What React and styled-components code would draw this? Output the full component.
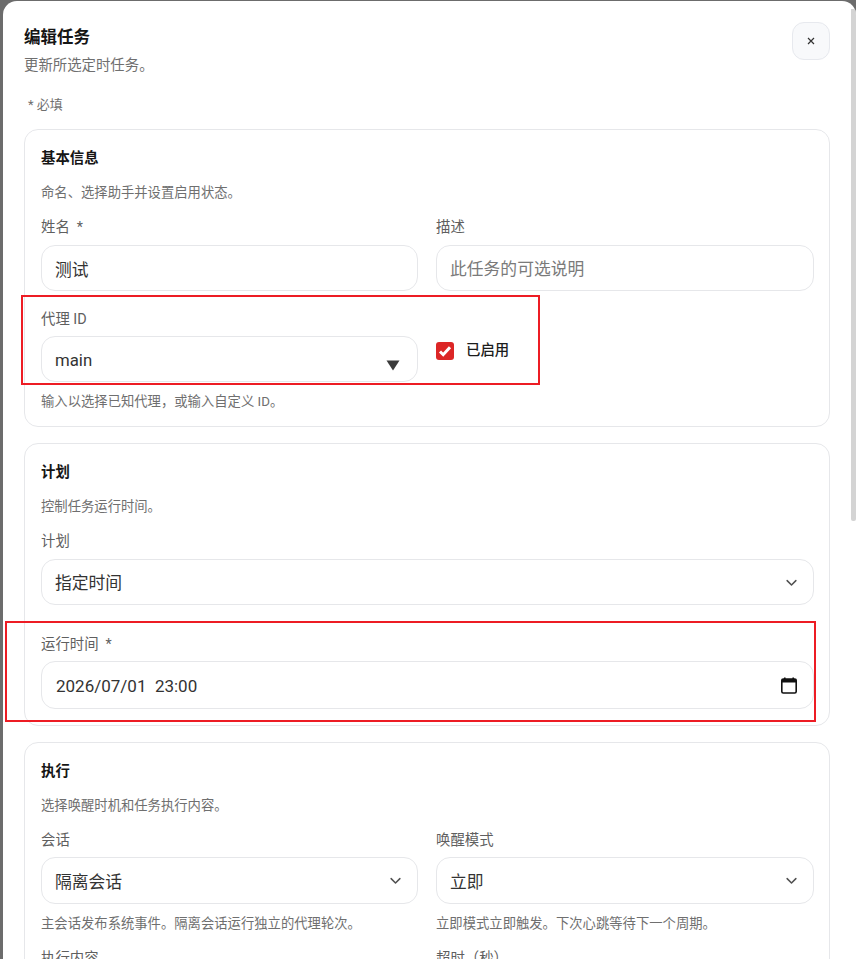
import React from "react";
import styled, { createGlobalStyle } from "styled-components";

const Global = createGlobalStyle`
  html, body { margin: 0; padding: 0; height: 100%; overflow: hidden; }
  body { font-family: Roboto, "Noto Sans CJK SC", "Noto Sans", sans-serif; }
  * { box-sizing: border-box; }
`;

const Backdrop = styled.div`
  position: relative;
  height: 959px;
  overflow: hidden;
  background: #6c6c6c;
  padding: 1px 0 0 3px;
`;

const Dialog = styled.div`
  position: relative;
  height: 100%;
  overflow: hidden;
  background: #fff;
  border-radius: 14px 14px 0 0;
  padding: 21px 26px 0 21px;
`;

const ScrollThumb = styled.div`
  position: absolute;
  top: 8px;
  right: 0;
  width: 5px;
  height: 512px;
  background: #d4d4d4;
  border-radius: 0 0 2px 2px;
`;

const Header = styled.header`
  display: flex;
  justify-content: space-between;
  align-items: flex-start;
`;

const TitleBlock = styled.div`
  padding-top: 3px;
`;

const Title = styled.h2`
  margin: 0;
  font-size: 16.5px;
  line-height: 26px;
  font-weight: 700;
  color: #151515;
`;

const Subtitle = styled.p`
  margin: 5px 0 0;
  font-size: 14.4px;
  line-height: 20px;
  color: #6f6f6f;
`;

const CloseButton = styled.button`
  width: 38px;
  height: 38px;
  padding: 0;
  display: flex;
  align-items: center;
  justify-content: center;
  background: #f8f9fb;
  border: 1px solid #e7e9ee;
  border-radius: 12px;
  color: #333;
`;

const Required = styled.p`
  margin: 20px 0 15px 4px;
  font-size: 13px;
  line-height: 18px;
  color: #6f6f6f;
`;

const Stack = styled.div`
  display: flex;
  flex-direction: column;
`;

const Card = styled.section`
  border: 1px solid #e6e7ea;
  border-radius: 14px;
  padding: 19px 15px ${(p) => p.$bottom ?? 16}px 16px;
  margin-bottom: ${(p) => p.$gap ?? 16}px;
`;

const CardTitle = styled.h3`
  margin: 0;
  font-size: 14.4px;
  line-height: 20px;
  font-weight: 700;
  color: #151515;
`;

const CardDesc = styled.p`
  margin: 15px 0 0;
  font-size: 13.33px;
  line-height: 18px;
  color: #6f6f6f;
`;

const Grid = styled.div`
  display: grid;
  grid-template-columns: 377fr 378fr;
  column-gap: 18px;
  row-gap: ${(p) => p.$rowGap ?? 17}px;
  margin-top: ${(p) => p.$top ?? 15}px;
`;

const Field = styled.div`
  display: flex;
  flex-direction: column;
  min-width: 0;
  grid-column: ${(p) => (p.$wide ? "1 / -1" : "auto")};
`;

const Label = styled.label`
  font-size: 14.4px;
  line-height: ${(p) => p.$line ?? 22}px;
  color: #5f5f5f;
  margin-bottom: ${(p) => p.$gap ?? 6}px;
`;

const Star = styled.span`
  margin-left: 7px;
`;

const Control = styled.div`
  position: relative;
  display: flex;
  align-items: center;
  height: ${(p) => p.$height ?? 46}px;
`;

const TextInput = styled.input`
  width: 100%;
  height: 100%;
  padding: 1px 14px 0 13px;
  font: inherit;
  font-size: 16.8px;
  color: #333;
  background: #fff;
  border: 1px solid #e6e7ea;
  border-radius: 14px;
  outline: none;
  white-space: pre;
  &::placeholder { color: #7a7a7a; opacity: 1; }
`;

const DateInput = styled(TextInput)`
  padding-left: 14px;
  font-size: 17px;
`;

const SelectBox = styled.div`
  width: 100%;
  height: 100%;
  display: flex;
  align-items: center;
  justify-content: space-between;
  padding: 0 14px 0 13px;
  font-size: 16.8px;
  color: #333;
  border: 1px solid #e6e7ea;
  border-radius: 14px;
`;

const ControlIcon = styled.svg`
  position: absolute;
  right: ${(p) => p.$right}px;
  top: ${(p) => p.$top}px;
  pointer-events: none;
`;

const Toggle = styled.label`
  display: flex;
  align-items: center;
  align-self: start;
  gap: 12px;
  padding-top: 33px;
  font-size: 14.4px;
  line-height: 18px;
  font-weight: 500;
  color: #1c1c1c;
`;

const ToggleText = styled.span`
  padding-top: 1px;
`;

const CheckBox = styled.span`
  width: 18px;
  height: 18px;
  display: flex;
  align-items: center;
  justify-content: center;
  background: #dc2626;
  border-radius: 3px;
`;

const Hint = styled.p`
  margin: 10px 0 0;
  font-size: 13.33px;
  line-height: 20px;
  color: #6f6f6f;
`;

const Annotation = styled.div`
  position: absolute;
  left: ${(p) => p.$left}px;
  top: ${(p) => p.$top}px;
  width: ${(p) => p.$width}px;
  height: ${(p) => p.$height}px;
  border: 2px solid #ed1c24;
  pointer-events: none;
`;

const Chevron = () => (
  <svg width="15" height="15" viewBox="0 0 24 24" fill="none" stroke="#505050" strokeWidth="2.4" strokeLinecap="round" strokeLinejoin="round">
    <path d="m5 9 7 7 7-7" />
  </svg>
);

const Select = ({ children, height }) => (
  <Control $height={height}>
    <SelectBox>
      <span>{children}</span>
      <Chevron />
    </SelectBox>
  </Control>
);

export default function App() {
  return (
    <>
      <Global />
      <Backdrop>
        <Dialog>
          <Header>
            <TitleBlock>
              <Title>编辑任务</Title>
              <Subtitle>更新所选定时任务。</Subtitle>
            </TitleBlock>
            <CloseButton aria-label="关闭">
              <svg width="8" height="8" viewBox="0 0 8 8" stroke="#333" strokeWidth="1.2" fill="none">
                <path d="M1 1l6 6M7 1L1 7" />
              </svg>
            </CloseButton>
          </Header>
          <Required>* 必填</Required>
          <Stack>
            <Card $bottom={14} $gap={16}>
              <CardTitle>基本信息</CardTitle>
              <CardDesc>命名、选择助手并设置启用状态。</CardDesc>
              <Grid>
                <Field>
                  <Label>姓名<Star>*</Star></Label>
                  <Control><TextInput readOnly value="测试" /></Control>
                </Field>
                <Field>
                  <Label>描述</Label>
                  <Control><TextInput readOnly placeholder="此任务的可选说明" /></Control>
                </Field>
                <Field>
                  <Label $line={24} $gap={4}>代理 ID</Label>
                  <Control>
                    <TextInput readOnly value="main" />
                    <ControlIcon $right={18} $top={24} width="14" height="11" viewBox="0 0 14 11">
                      <path d="M0.500 0.500h13L7 10.500z" fill="#3a3a3a" />
                    </ControlIcon>
                  </Control>
                </Field>
                <Toggle>
                  <CheckBox>
                    <svg width="14" height="14" viewBox="0 0 14 14" fill="none" stroke="#fff" strokeWidth="3">
                      <path d="M2 7.500l3.200 3.200L12 3.200" />
                    </svg>
                  </CheckBox>
                  <ToggleText>已启用</ToggleText>
                </Toggle>
              </Grid>
              <Hint>输入以选择已知代理，或输入自定义 ID。</Hint>
            </Card>
            <Card $gap={16} $bottom={16}>
              <CardTitle>计划</CardTitle>
              <CardDesc>控制任务运行时间。</CardDesc>
              <Grid>
                <Field $wide>
                  <Label>计划</Label>
                  <Select>指定时间</Select>
                </Field>
              </Grid>
              <Grid $top={28}>
                <Field $wide>
                  <Label $line={24} $gap={4}>运行时间<Star>*</Star></Label>
                  <Control $height={48}>
                    <DateInput readOnly value="2026/07/01  23:00" />
                    <ControlIcon $right={17} $top={16} width="16" height="17" viewBox="0 0 16 17">
                      <path d="M3 0.500h1.600v2H3zM11.400 0.500H13v2h-1.600z" fill="#111" />
                      <rect x="0.800" y="2" width="14.400" height="14" rx="1.500" fill="none" stroke="#111" strokeWidth="1.600" />
                      <rect x="0.800" y="2" width="14.400" height="3.500" fill="#111" />
                    </ControlIcon>
                  </Control>
                </Field>
              </Grid>
            </Card>
            <Card>
              <CardTitle>执行</CardTitle>
              <CardDesc>选择唤醒时机和任务执行内容。</CardDesc>
              <Grid $rowGap={14}>
                <Field>
                  <Label $gap={5}>会话</Label>
                  <Select height={47}>隔离会话</Select>
                  <Hint>主会话发布系统事件。隔离会话运行独立的代理轮次。</Hint>
                </Field>
                <Field>
                  <Label $gap={5}>唤醒模式</Label>
                  <Select height={47}>立即</Select>
                  <Hint>立即模式立即触发。下次心跳等待下一个周期。</Hint>
                </Field>
                <Field>
                  <Label>执行内容</Label>
                </Field>
                <Field>
                  <Label>超时（秒）</Label>
                </Field>
              </Grid>
            </Card>
          </Stack>
          <ScrollThumb />
        </Dialog>
        <Annotation $left={21} $top={295} $width={519} $height={90} />
        <Annotation $left={5} $top={621} $width={811} $height={101} />
      </Backdrop>
    </>
  );
}
